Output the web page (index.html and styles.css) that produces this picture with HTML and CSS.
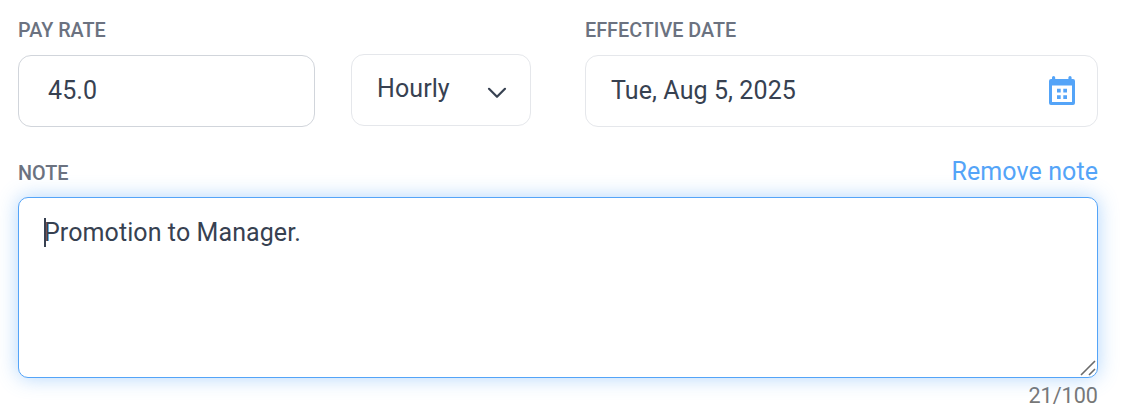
FILE: index.html
```
<!doctype html>
<html lang="en">
  <head>
    <meta charset="utf-8">
    <title>Pay rate</title>
    <link rel="stylesheet" href="styles.css">
  </head>
  <body>
    <form class="pay-form">
      <div class="row">
        <div class="field rate-field">
          <label class="label">PAY RATE</label>
          <div class="rate-controls">
            <div class="control rate">45.0</div>
            <div class="control period">
              <span>Hourly</span>
              <svg class="chevron" width="20" height="12" viewBox="0 0 20 12">
                <path d="M2 1.8L10 9.8L18 1.8"/>
              </svg>
            </div>
          </div>
        </div>
        <div class="field date-field">
          <label class="label">EFFECTIVE DATE</label>
          <div class="control date">
            <span>Tue, Aug 5, 2025</span>
            <svg class="calendar" width="26" height="29" viewBox="0 0 26 29">
              <path fill-rule="evenodd" d="M3 3V1.5Q3 0 4.600 0T6.200 1.500V3H19.400V1.500Q19.400 0 21 0T22.600 1.500V3H24Q26 3 26 5V27Q26 29 24 29H2Q0 29 0 27V5Q0 3 2 3ZM3 9.500V26H23V9.500Z"/>
              <path d="M8 12.800h3.700v3.600H8zM14.300 12.800H18v3.600h-3.700zM8 19.300h3.700v3.600H8zM14.300 19.300H18v3.600h-3.700z"/>
            </svg>
          </div>
        </div>
      </div>
      <div class="note-head">
        <label class="label">NOTE</label>
        <a class="remove">Remove note</a>
      </div>
      <div class="note">
        <span class="caret"></span>
        <span>Promotion to Manager.</span>
        <svg class="resizer" width="16" height="16" viewBox="0 0 16 16">
          <path d="M1 15L15 1M9 15L15 9"/>
        </svg>
      </div>
      <div class="counter">21/100</div>
    </form>
  </body>
</html>
```

FILE: styles.css
```
* {
  box-sizing: border-box;
}

body {
  margin: 0;
  background: #fff;
  color: #374151;
  font: 25px/30px Roboto, sans-serif;
  letter-spacing: .09px;
}

.pay-form {
  padding: 18px 26px 0 18px;
}

.row {
  display: flex;
  gap: 54px;
}

.date-field {
  flex: 1;
}

.label {
  display: block;
  height: 24px;
  color: #6b7280;
  font-size: 19.8px;
  font-weight: 500;
  line-height: 25px;
  letter-spacing: 0;
}

.rate-controls {
  display: flex;
  gap: 36px;
}

.control {
  display: flex;
  align-items: center;
  height: 72px;
  margin-top: 13px;
  border: 1px solid #e5e7eb;
  border-radius: 13px;
}

.rate {
  width: 297px;
  padding-left: 29px;
  border-color: #d1d5db;
}

.period {
  justify-content: space-between;
  width: 180px;
  margin-top: 12px;
  padding: 0 23px 2px 25px;
}

.date {
  justify-content: space-between;
  padding: 0 22px 0 25px;
}

.chevron {
  margin-top: 8px;
  fill: none;
  stroke: #374151;
  stroke-width: 2.2;
  stroke-linecap: round;
  stroke-linejoin: round;
}

.calendar {
  margin-bottom: 2px;
  fill: #54a4f8;
}

.note-head {
  display: flex;
  justify-content: space-between;
  height: 36px;
  margin-top: 34px;
}

.note-head .label {
  height: auto;
}

.remove {
  color: #54a4f8;
  line-height: 22px;
}

.note {
  position: relative;
  height: 181px;
  padding: 20px 25px;
  border: 1px solid #54a4f8;
  border-radius: 10px;
  background: #fff;
  box-shadow: 0 0 20px rgba(84, 164, 248, .45);
}

.caret {
  position: absolute;
  top: 20px;
  left: 25px;
  width: 2px;
  height: 29px;
  background: #374151;
}

.resizer {
  position: absolute;
  right: 1px;
  bottom: 1px;
  fill: none;
  stroke: #6b6b6b;
  stroke-width: 1.6;
}

.counter {
  color: #777;
  font-size: 21.6px;
  line-height: 36px;
  letter-spacing: 0;
  text-align: right;
}
```
